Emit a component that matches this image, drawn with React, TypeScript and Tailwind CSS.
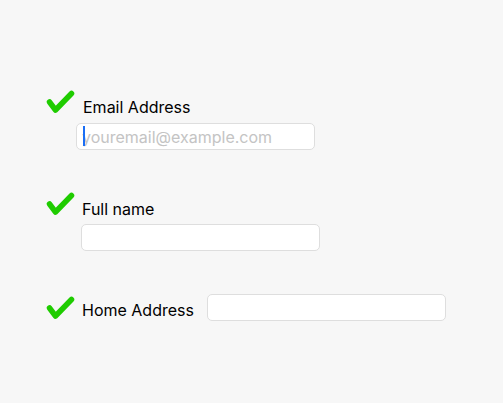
import React from 'react'

function Check() {
  return (
    <svg width="30" height="26" viewBox="0 0 30 26" className="shrink-0">
      <path d="M4.5 13 L10.5 21 L26.5 4.5" fill="none" stroke="#1fcc00" strokeWidth="5.5" strokeLinecap="round" strokeLinejoin="round" />
    </svg>
  )
}

const inputCls =
  'w-[239px] h-[27px] rounded-[5px] border border-[#dedede] bg-white px-[5px] text-[16px] text-black outline-none placeholder:text-[#c4c4c4] caret-[#1a6ef5]'

export default function App() {
  return (
    <div className="min-h-screen w-full bg-[#f7f7f7] font-['Inter','Noto_Sans',sans-serif] text-[16px] text-black">
      <div className="pl-[45px] pt-[89px]">
        <div className="flex items-end">
          <Check />
          <span className="ml-[8px] leading-[20px] mb-[-2px]">Email Address</span>
        </div>
        <div className="ml-[31px] mt-[8px] relative">
          <input className={inputCls} placeholder="youremail@example.com" />
          <span className="absolute left-[7px] top-[3px] h-[20px] w-[2px] bg-[#1a6ef5]" />
        </div>

        <div className="flex items-end mt-[41px]">
          <Check />
          <span className="ml-[7px] leading-[20px] mb-[-2px]">Full name</span>
        </div>
        <div className="ml-[36px] mt-[7px]">
          <input className={inputCls} />
        </div>

        <div className="flex items-center mt-[43px]">
          <Check />
          <span className="ml-[7px] leading-[20px] mt-[5px]">Home Address</span>
          <input className={inputCls + ' ml-[13px]'} />
        </div>
      </div>
    </div>
  )
}
